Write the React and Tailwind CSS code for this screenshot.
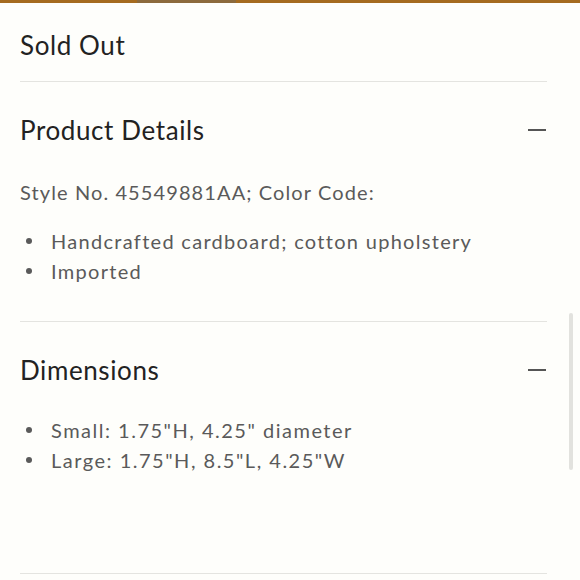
function Section({ title, children }) {
  return (
    <div className="border-b border-[#e4e4e0]">
      <div className="flex items-center justify-between h-[96px]">
        <h2 className="text-[26px] text-[#222] tracking-[0.6px]">{title}</h2>
        <div className="w-[18px] h-[2px] bg-[#555] mr-[1px]" />
      </div>
      {children}
    </div>
  );
}

function Bullet({ children }) {
  return (
    <li className="flex items-center">
      <span className="w-[6px] h-[6px] rounded-full bg-[#5a5a5a] ml-[6px] mr-[19px]" />
      {children}
    </li>
  );
}

export default function App() {
  return (
    <div
      className="relative w-[580px] h-[580px] overflow-hidden bg-[#fefefb]"
      style={{ fontFamily: "Lato, 'Noto Sans', sans-serif" }}
    >
      <div className="flex h-[3px] bg-[#a56b1f]">
        <div className="ml-[137px] w-[99px] bg-[#8c6a3c]" />
      </div>
      <div className="pl-[20px] pr-[33px]">
        <div className="border-b border-[#e4e4e0] h-[79px] flex items-end pb-[16px]">
          <span className="text-[26px] text-[#222] tracking-[0.6px]">Sold Out</span>
        </div>
        <Section title="Product Details">
          <p className="text-[20px] text-[#5a5a5a] tracking-[1.1px] leading-[30px] mt-[-1px]">
            Style No. 45549881AA; Color Code:
          </p>
          <ul className="mt-[19px] mb-[35px] text-[20px] text-[#5a5a5a] tracking-[1.3px] leading-[30px]">
            <Bullet>Handcrafted cardboard; cotton upholstery</Bullet>
            <Bullet>Imported</Bullet>
          </ul>
        </Section>
        <Section title="Dimensions">
          <ul className="mt-[-3px] mb-[98px] text-[20px] text-[#5a5a5a] tracking-[1.5px] leading-[30px]">
            <Bullet>Small: 1.75"H, 4.25" diameter</Bullet>
            <Bullet>Large: 1.75"H, 8.5"L, 4.25"W</Bullet>
          </ul>
        </Section>
      </div>
      <div className="absolute right-[7px] top-[313px] w-[4px] h-[157px] rounded-full bg-[#e2e2de]" />
    </div>
  );
}
